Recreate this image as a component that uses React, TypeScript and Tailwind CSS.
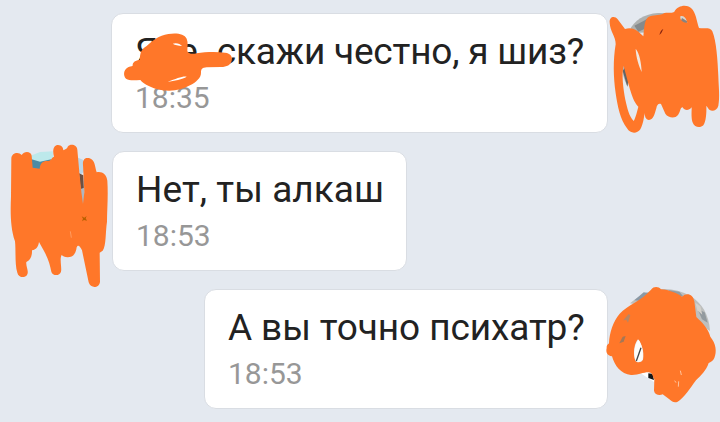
import React from "react";

const ORANGE = "#ff7729";

function Bubble({ width, time, children, overlay }: { width: string; time: string; children: React.ReactNode; overlay?: React.ReactNode }) {
  return (
    <div className={`relative h-[120px] shrink-0 rounded-[12px] border border-[#d9dde3] bg-white pl-[23px] pt-[15px] ${width}`}>
      <p className="whitespace-nowrap text-[37px] leading-[46px] tracking-[-0.05px] text-[#222222]">{children}</p>
      <p className="text-[30px] leading-[46px] text-[#979797]">{time}</p>
      {overlay}
    </div>
  );
}

function NameScribble() {
  return (
    <svg className="absolute -left-[12px] -top-[14px] h-[140px] w-[240px]" viewBox="0 0 720 420" fill={ORANGE}>
      <path
        fillRule="evenodd"
        d="M120 180C119 160 124 147 140 138C158 122 176 107 205 102C229 98 253 101 260 116C265 127 262 142 262 153C264 160 275 164 290 160C315 156 347 155 375 158C392 160 398 170 395 182C392 195 381 200 363 201L320 202C307 203 303 207 303 218C304 233 287 247 270 256C246 270 214 276 183 270C157 265 132 254 121 240C104 241 88 243 78 236C69 227 71 211 81 204C87 199 95 199 98 197C97 187 107 180 120 180ZM203 245C222 243 248 238 260 230C250 227 229 236 203 245ZM218 131C228 127 241 131 246 138C234 136 226 136 218 131Z"
      />
    </svg>
  );
}

function AvatarOne() {
  return (
    <svg className="relative h-[119px] w-[112px] shrink-0 overflow-visible" viewBox="24 39 336 357">
      <path d="M88 92C102 61 133 42 174 39L218 40L200 95L115 98Z" fill="#aeb1b0" />
      <path d="M103 77L132 62L145 54L135 86L115 95Z" fill="#858a8c" />
      <path d="M66 190Q65 230 83 260L90 218Z" fill="#b8b8b6" />
      <path d="M68 212L82 260L87 230L76 202Z" fill="#636465" />
      <path d="M105 130L120 150L127 230L112 195Z" fill="#f2e8df" />
      <path d="M234 42L260 40L269 72L242 65Z" fill="#d8d3cc" />
      <path d="M246 54L264 65L256 72L242 63Z" fill="#868381" />
      <path
        fill={ORANGE}
        fillRule="evenodd"
        d="M29 68C27 50 44 46 53 58L75 87C95 79 114 91 130 109C133 86 132 54 150 49C166 43 180 48 193 39C207 36 216 41 223 35C233 17 258 12 273 24C288 36 290 65 297 84C313 87 331 80 337 94C349 122 353 181 355 229C356 263 360 291 355 317C351 334 330 337 324 324L319 317C320 338 318 365 310 376C301 385 283 382 279 370C273 357 275 337 275 322C266 334 253 332 248 322C240 323 242 334 234 345C225 357 205 354 196 341L183 312C176 309 171 313 169 325C164 340 161 360 147 360C137 360 134 348 134 339C132 352 130 371 121 388C111 402 91 402 81 385C61 360 52 316 47 280C40 230 39 180 47 133C48 110 30 94 29 68ZM71 197C64 224 70 266 76 299C82 325 87 348 101 363C106 355 111 336 115 320C102 308 96 287 89 265C82 240 76 218 71 197ZM107 146C108 172 117 199 125 216C124 190 119 161 107 146ZM241 49C239 60 250 70 262 68C259 55 251 44 241 49Z"
      />
      <path d="M178 105C181 95 184 89 190 87L184 99Z" fill="#82200e" />
    </svg>
  );
}

function AvatarTwo() {
  return (
    <svg className="relative h-[119px] w-[112px] shrink-0 overflow-visible" viewBox="0 48 336 357">
      <path d="M92 62L120 51L158 49L160 75L125 84L95 78Z" fill="#bde9eb" />
      <path d="M95 73L120 80L154 73L140 104L96 104Z" fill="#4b8ba5" />
      <path d="M228 65L250 75L252 110L240 120Z" fill="#b9d5e8" />
      <path d="M237 115L250 121L253 198L242 165Z" fill="#6c5042" />
      <path d="M241 162L253 158L256 230L243 225Z" fill="#aeb7c0" />
      <path
        fill={ORANGE}
        d="M34 70C35 53 56 49 65 60C73 47 93 49 95 62L98 98L119 101C120 84 130 76 145 78C155 76 156 66 162 65C156 44 162 30 174 30C185 30 190 39 190 46C197 41 202 41 203 35C212 24 231 30 232 44L238 112L244 170L249 207L253 172L249 90C247 71 258 66 269 70C286 77 284 93 290 112C306 108 320 119 322 137C325 182 321 228 321 260C316 292 319 331 308 347L299 353L300 440C298 461 271 461 266 442L246 346C239 333 235 328 230 337C228 356 219 367 203 367C194 367 188 362 185 360C178 371 186 398 183 410C178 425 157 422 154 410C150 389 144 370 132 348L117 321C115 334 110 344 96 346C97 361 91 377 79 381C77 396 88 408 81 420C73 431 55 427 52 413C44 389 48 347 45 319C31 279 31 230 33 185Z"
      />
      <path d="M245 244L253 248L260 243L257 250L261 257L252 255L246 259L249 251Z" fill="#b66000" />
      <path d="M211 289L214 308" stroke="#ffad7c" strokeWidth="2" />
    </svg>
  );
}

function AvatarThree() {
  return (
    <svg className="relative h-[119px] w-[112px] shrink-0 overflow-visible" viewBox="36 42 336 357">
      <path d="M102 85C160 35 222 30 285 64C316 84 340 118 342 168L300 140L266 64L200 65L132 91Z" fill="#bdbfbe" />
      <path d="M115 76L143 52L158 54L136 78Z" fill="#8b99a5" />
      <path d="M217 45L250 50L263 65L240 64Z" fill="#919ca3" />
      <path d="M305 103L326 112L335 143L318 133Z" fill="#929a9f" />
      <path d="M298 83L313 94L319 119L304 106Z" fill="#d4d1cb" />
      <path d="M130 292L158 292L175 310L175 322L151 306Z" fill="#ffffff" />
      <path d="M157 295L170 297L174 315L157 309Z" fill="#151719" />
      <path
        fill={ORANGE}
        fillRule="evenodd"
        d="M39 205C40 172 52 138 71 116C94 90 137 77 165 44C174 33 188 35 195 43C218 44 247 56 258 65C272 51 291 57 295 79L301 126C319 143 337 161 343 185C360 206 363 229 355 249C351 258 344 262 338 264C331 286 314 302 300 316C282 340 265 369 245 380C235 385 226 379 220 373L200 358C190 363 176 359 174 347L175 313C169 302 170 294 158 292C143 291 129 301 105 300C75 298 55 271 48 244C33 242 29 232 32 219C32 209 36 209 39 205ZM126 193C115 204 110 237 118 257C124 264 136 263 141 254C146 230 135 201 126 193Z"
      />
      <path d="M127 194C114 210 112 240 119 256C125 264 136 261 140 252C143 232 137 205 127 194Z" fill="#fffdf9" />
      <path d="M121 258L135 218" stroke="#41484b" strokeWidth="4" />
      <path d="M82 136L98 117L103 121L96 143L91 135Z" fill="#b98663" />
      <path d="M70 205L80 185L89 183L83 200Z" fill="#a57755" />
      <path d="M253 287L256 300M248 319L247 335M236 317L240 323" stroke="#ffc49c" strokeWidth="3" />
    </svg>
  );
}

export default function App() {
  return (
    <main className="flex h-[422px] w-[720px] flex-col overflow-hidden bg-[#e4e9f0] pt-[13px] font-['Roboto',sans-serif]">
      <section className="flex pl-[111px]">
        <Bubble width="w-[497px]" time="18:35" overlay={<NameScribble />}>
          <span className="tracking-[-0.2px]">
            Я<span className="inline-block w-[20px]" />е,<span className="ml-[3px]"> скажи честно, я шиз?</span>
          </span>
        </Bubble>
        <AvatarOne />
      </section>
      <section className="mt-[18px] flex">
        <AvatarTwo />
        <Bubble width="w-[295px]" time="18:53">
          <span className="tracking-[0.05px]">Нет, ты алкаш</span>
        </Bubble>
      </section>
      <section className="mt-[18px] flex pl-[204px]">
        <Bubble width="w-[404px]" time="18:53">
          <span className="tracking-[-0.1px]">А вы точно психатр?</span>
        </Bubble>
        <AvatarThree />
      </section>
    </main>
  );
}
